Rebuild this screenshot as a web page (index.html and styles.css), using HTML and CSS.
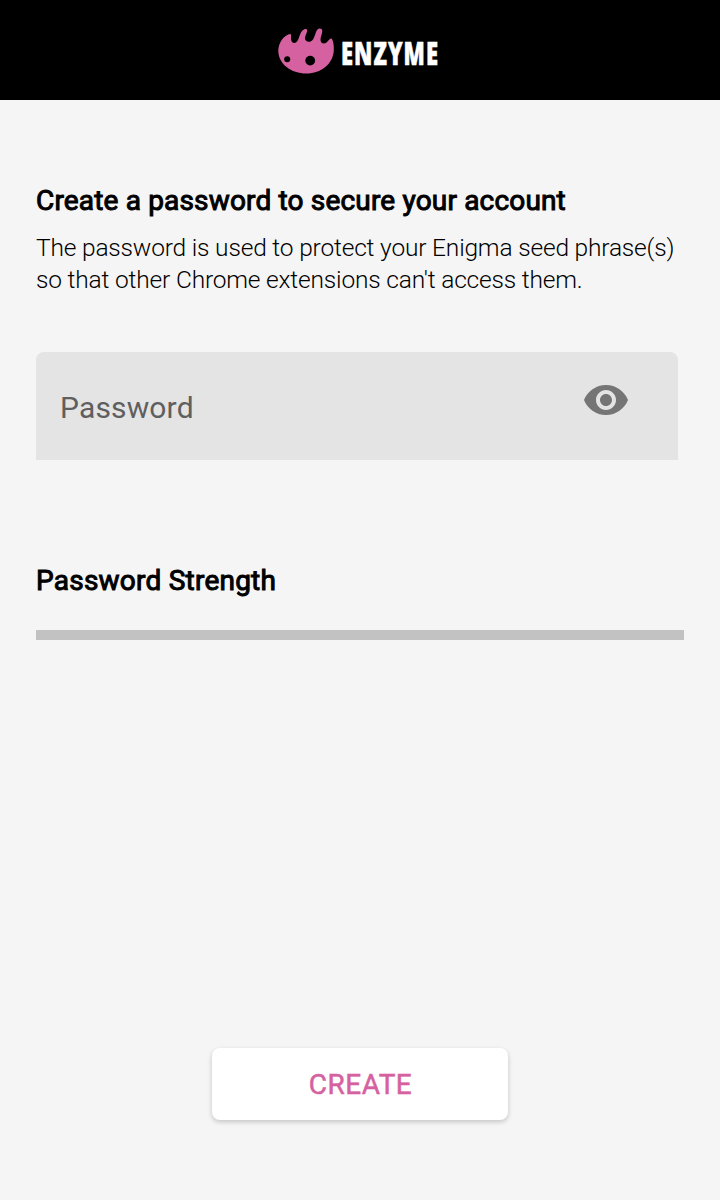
FILE: index.html
```html
<!DOCTYPE html>
<html lang="en">
<head>
<meta charset="utf-8">
<title>Enzyme</title>
<link rel="stylesheet" href="styles.css">
</head>
<body>
<header class="header">
  <svg class="logo" width="160" height="46" viewBox="0 0 160 46" role="img" aria-label="Enzyme">
    <path class="logo-mark" d="M12.500 6C13.600 6.500 12.600 10 13.300 12.500C14 15.500 18 16 20 12C21.500 8.500 22 5 24.500 2.500C26 .8 29 .2 29.200 2.200C29.400 4.500 27 7.500 27 10C27 14.500 32.500 15 35 11.500C37 8.500 37.500 4.500 39 2C40.500 -.2 44 -.2 44.300 2.500C44.500 5.500 42.300 9 42.500 12C42.700 15.500 46 16.600 48.500 14.500C50.500 13 52 9.500 53.700 10.700C55.400 13 56 18 55.800 22.500C55 36 43 45.500 28.500 45.500C13 45.500 .3 36 .3 22.500C.5 14 6.500 6.800 12.500 6Z"/>
    <circle cx="9.200" cy="31.200" r="3"/>
    <circle cx="32.200" cy="32.600" r="4.900"/>
    <text class="logo-name" x="63" y="37" textLength="98" lengthAdjust="spacingAndGlyphs">ENZYME</text>
  </svg>
</header>
<main class="content">
  <h1 class="title">Create a password to secure your account</h1>
  <p class="description">The password is used to protect your Enigma seed phrase(s)<br>so that other Chrome extensions can't access them.</p>
  <div class="field">
    <span class="field-label">Password</span>
    <svg class="eye" width="48" height="48" viewBox="0 0 24 24"><path d="M12 4.500C7 4.500 2.730 7.610 1 12c1.730 4.390 6 7.500 11 7.500s9.270-3.110 11-7.500c-1.730-4.390-6-7.500-11-7.500zM12 17c-2.760 0-5-2.240-5-5s2.240-5 5-5 5 2.240 5 5-2.240 5-5 5zm0-8c-1.660 0-3 1.340-3 3s1.340 3 3 3 3-1.340 3-3-1.340-3-3-3z"/></svg>
  </div>
  <h2 class="title strength-title">Password Strength</h2>
  <div class="strength-bar"></div>
  <button class="create" type="button">CREATE</button>
</main>
</body>
</html>
```
FILE: styles.css
```css
* { box-sizing: border-box; }
body {
  margin: 0;
  height: 1200px;
  display: flex;
  flex-direction: column;
  background: #f5f5f5;
  color: #000;
  font-family: Roboto, sans-serif;
}
.header {
  height: 100px;
  flex: none;
  display: flex;
  justify-content: center;
  align-items: center;
  background: #000;
  padding-top: 2px;
  padding-right: 4px;
}
.logo { overflow: visible; }
.logo-mark { fill: #d661a0; }
.logo-name {
  font: 800 32px "Open Sans", sans-serif;
  letter-spacing: 1.5px;
  fill: #fff;
  stroke: #fff;
  stroke-width: 0.6px;
}
.content {
  flex: 1;
  display: flex;
  flex-direction: column;
  padding: 85px 36px 80px;
}
.title {
  margin: 0;
  font-size: 28px;
  line-height: 32px;
  font-weight: 400;
  letter-spacing: 0.17px;
  -webkit-text-stroke: 1px #000;
  white-space: nowrap;
}
.strength-title { letter-spacing: 0.23px; }
.description {
  margin: 15px 0 0;
  font-size: 24.5px;
  line-height: 32px;
  font-weight: 300;
  letter-spacing: -0.18px;
  white-space: nowrap;
}
.field {
  display: flex;
  justify-content: space-between;
  width: 642px;
  height: 108px;
  margin-top: 56px;
  padding: 24px 48px 0 24px;
  border-radius: 8px 8px 0 0;
  background: #e4e4e4;
}
.field-label {
  padding-top: 14px;
  font-size: 30px;
  line-height: 36px;
  letter-spacing: 0.15px;
  color: #5f5f5f;
}
.eye { fill: #757575; }
.strength-title { margin-top: 105px; }
.strength-bar {
  height: 10px;
  margin-top: 33px;
  background: #c2c2c2;
}
.create {
  width: 296px;
  height: 72px;
  margin: auto auto 0;
  padding: 2px 0 0 1px;
  border: 0;
  border-radius: 8px;
  background: #fff;
  color: #d661a0;
  font: 400 28px/70px Roboto, sans-serif;
  letter-spacing: 0.5px;
  -webkit-text-stroke: 0.5px #d661a0;
  box-shadow: 0 2px 5px rgba(0, 0, 0, 0.2);
}
```
